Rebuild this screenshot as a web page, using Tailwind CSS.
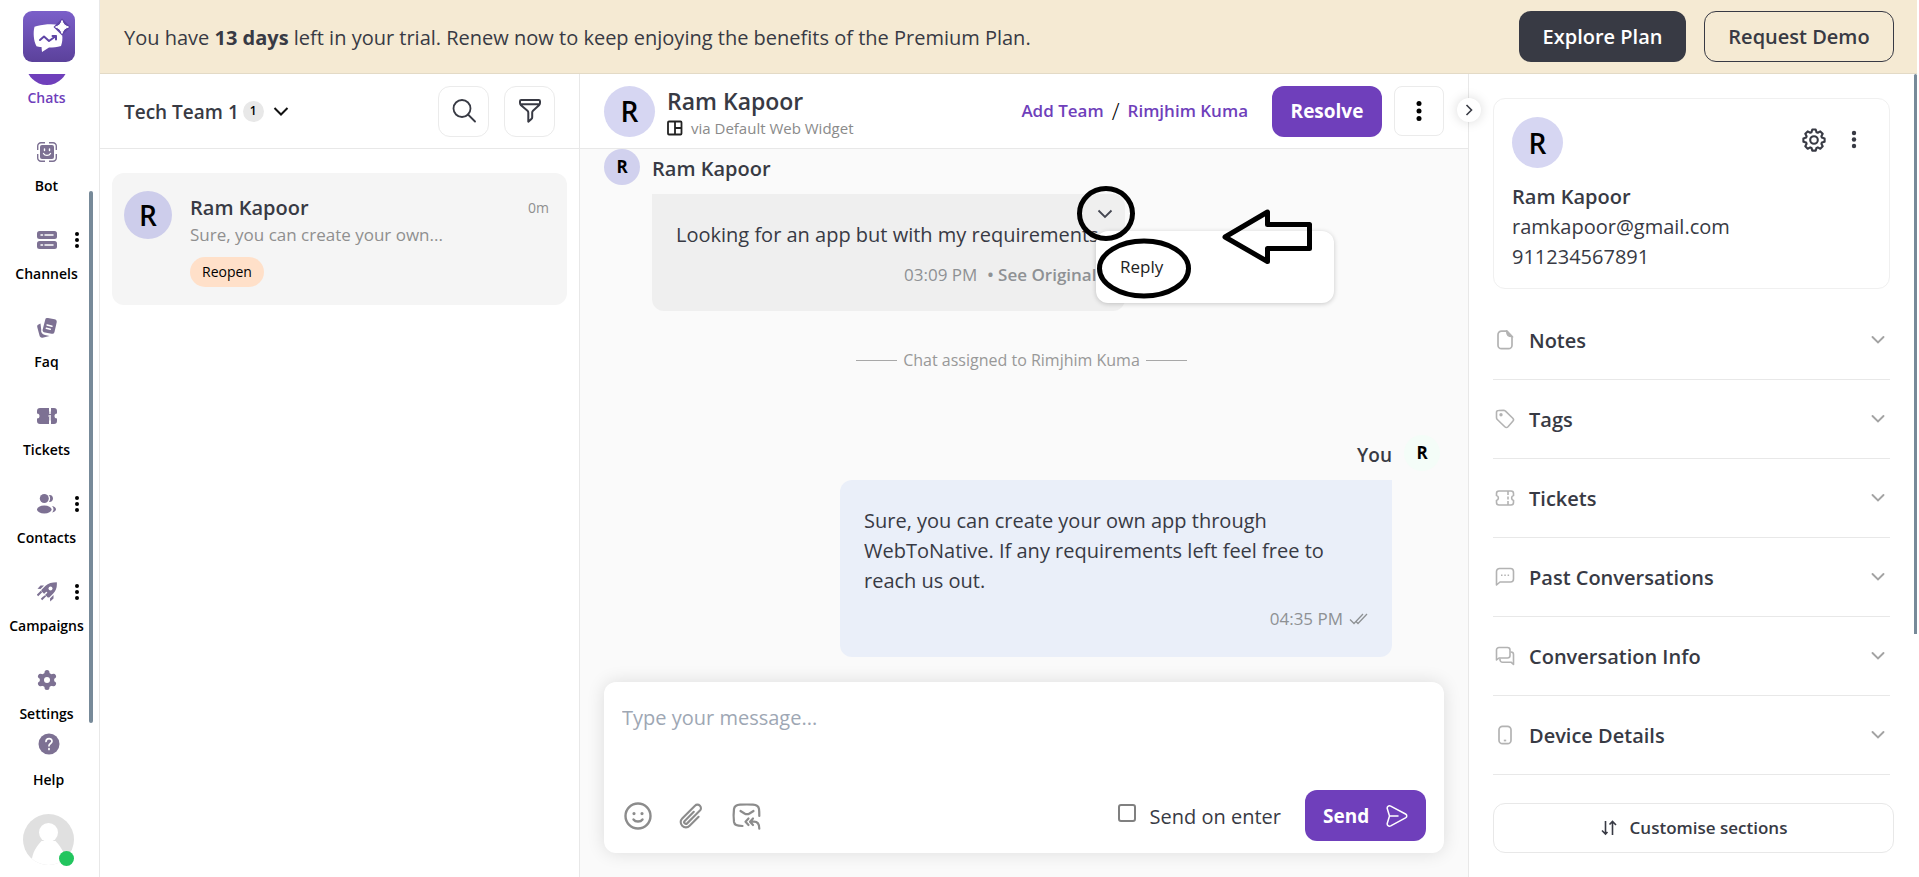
<!DOCTYPE html>
<html lang="en">
<head>
    <meta charset="UTF-8">
    <meta name="viewport" content="width=device-width, initial-scale=1.0">
    <title>Chats</title>
    <!-- Tailwind CSS CDN -->
    <script src="https://cdn.jsdelivr.net/npm/@tailwindcss/browser@4"></script>
</head>
<body class="flex h-screen overflow-hidden bg-white pr-0.5 font-['Open_Sans','Noto_Sans',sans-serif] text-[20px] leading-[30px] text-[#383a44]">
    <!-- Sidebar -->
    <aside class="relative flex w-[100px] shrink-0 flex-col border-r border-[#e8e8e8] text-sm font-semibold text-black">
        <a href="#" aria-label="Home" class="ml-[23px] mt-[11px] mb-3 block">
            <svg width="52" height="51" viewBox="0 0 52 51">
                <defs>
                    <linearGradient id="logoFill" x1="0" y1="0" x2="0" y2="1">
                        <stop offset="0" stop-color="#7b5fc9"/>
                        <stop offset="1" stop-color="#5b419b"/>
                    </linearGradient>
                </defs>
                <rect width="52" height="51" rx="9" fill="url(#logoFill)"/>
                <path d="M14 15c8-2 16-2 22-1l3 9c1 5 0 9-1 12-4 1.500-8 1.500-12 1.500L19 41l-.5-5c-2 0-4-.3-5-.8-3-5-3.500-14-2-19.400z" fill="#fff"/>
                <path d="M39 7.500 47.500 16 39 24.500 30.500 16z" fill="#5f45a6"/>
                <path d="M39 9.500c1 3.500 3 5.500 6.500 6.500-3.500 1-5.500 3-6.500 6.500-1-3.500-3-5.500-6.500-6.500 3.500-1 5.500-3 6.500-6.500z" fill="#fff" stroke="#fff" stroke-linejoin="round"/>
                <path d="m17 29 4-3.500 5 4.500 7-5M29.500 25H33v3.500" fill="none" stroke="#5f45a6" stroke-width="2" stroke-linecap="round" stroke-linejoin="round"/>
            </svg>
        </a>

        <nav class="h-[650px] overflow-hidden pr-1.5">
            <a href="#" class="-mt-[31px] flex h-[88px] flex-col items-center text-[#6f3fbb]">
                <span class="size-[42px] rounded-full bg-[#6f3fbb]"></span>
                <span class="mt-[3px] leading-5">Chats</span>
            </a>
            <a href="#" class="flex h-[88px] flex-col items-center">
                <span class="flex size-[42px] items-center justify-center">
                    <svg width="20" height="20" viewBox="0 0 20 20" fill="none" stroke="#7d7193">
                        <rect x="3" y="3" width="14" height="14" rx="2" fill="#7d7193" stroke="none"/>
                        <path d="M.7 8V4A3.300 3.300 0 0 1 4 .7h4M12 .7h4A3.300 3.300 0 0 1 19.300 4v4M19.300 12v4a3.300 3.300 0 0 1-3.300 3.300h-4M8 19.300H4A3.300 3.300 0 0 1 .7 16v-4" stroke-width="1.400"/>
                        <path d="M7.500 7v1.500M12.500 7v1.500M6.500 11.500c1.500 2.500 5.500 2.500 7 0" stroke="#fff" stroke-width="1.400" stroke-linecap="round"/>
                    </svg>
                </span>
                <span class="mt-[3px] leading-5">Bot</span>
            </a>
            <a href="#" class="relative flex h-[88px] flex-col items-center">
                <span class="flex size-[42px] items-center justify-center">
                    <svg width="20" height="18" viewBox="0 0 20 18">
                        <rect width="20" height="8" rx="2.500" fill="#7d7193"/>
                        <rect y="10" width="20" height="8" rx="2.500" fill="#7d7193"/>
                        <path d="M4 4h1.500M8 4h8M4 14h1.500M8 14h8" stroke="#fff" stroke-width="1.500" stroke-linecap="round"/>
                    </svg>
                </span>
                <span class="mt-[3px] leading-5">Channels</span>
                <svg class="absolute -right-px top-3" width="36" height="18" viewBox="0 0 36 18"><circle cx="19" cy="3" r="2"/><circle cx="19" cy="9" r="2"/><circle cx="19" cy="15" r="2"/></svg>
            </a>
            <a href="#" class="flex h-[88px] flex-col items-center">
                <span class="flex size-[42px] items-center justify-center">
                    <svg width="20" height="20" viewBox="0 0 20 20">
                        <path d="M3.500 5.500 1.500 6.500C.3 7 0 8 .3 9.200l2.200 8.300c.4 1.500 1.500 2.500 3 2.200l7-1.700-4.500-1C5 16.200 3.700 14.500 4.200 11.500z" fill="#7d7193"/>
                        <path d="M8.500.8c.5-.7 1.500-1 2.500-.8l6.500 1.300c1.500.3 2.500 1.500 2.200 3L17.500 14c-.4 1.500-1.500 2-3 1.800L8 14.500c-1.800-.4-2.700-1.500-2.300-3z" fill="#7d7193"/>
                        <path d="m10 7 5 1.300M9.300 10.300l4 1" stroke="#fff" stroke-width="1.400" stroke-linecap="round"/>
                    </svg>
                </span>
                <span class="mt-[3px] leading-5">Faq</span>
            </a>
            <a href="#" class="flex h-[88px] flex-col items-center">
                <span class="flex size-[42px] items-center justify-center">
                    <svg width="20" height="16" viewBox="0 0 20 16">
                        <path d="M3 0h9v3.500h2V0h3a3 3 0 0 1 3 3v2.500a2.500 2.500 0 0 0 0 5V13a3 3 0 0 1-3 3h-3v-3.500h-2V16H3a3 3 0 0 1-3-3v-2.500a2.500 2.500 0 0 0 0-5V3a3 3 0 0 1 3-3z" fill="#7d7193"/>
                        <path d="M13 3v3M13 9v4M11.500 8H14" stroke="#fff" stroke-width="1.500"/>
                    </svg>
                </span>
                <span class="mt-[3px] leading-5">Tickets</span>
            </a>
            <a href="#" class="relative flex h-[88px] flex-col items-center">
                <span class="flex size-[42px] items-center justify-center">
                    <svg width="20" height="20" viewBox="0 0 20 20" fill="#7d7193">
                        <circle cx="7.300" cy="4.500" r="4.500"/>
                        <ellipse cx="7.300" cy="15.500" rx="7.300" ry="4"/>
                        <path d="M12 1c2.500-.5 4 1.500 4 3.500S14.500 8.300 12 8c1.500-2 1.500-5 0-7zM15 12c2.500.3 4 1.700 4 3.300 0 1.500-1.500 3-4 3.200 2-2 2-4.500 0-6.500z"/>
                    </svg>
                </span>
                <span class="mt-[3px] leading-5">Contacts</span>
                <svg class="absolute -right-px top-3" width="36" height="18" viewBox="0 0 36 18"><circle cx="19" cy="3" r="2"/><circle cx="19" cy="9" r="2"/><circle cx="19" cy="15" r="2"/></svg>
            </a>
            <a href="#" class="relative flex h-[88px] flex-col items-center">
                <span class="flex size-[42px] items-center justify-center">
                    <svg width="20" height="20" viewBox="0 0 20 20">
                        <path d="M19.800.2c.5 5-.8 8.500-3.800 11.500l-3.500 3.500c-.5.500-1.200.5-1.700.3l-6.300-6.300c-.3-.5-.2-1.200.3-1.700L8.300 4C11.300 1 15 .2 19.800.2zM7 3.500 3.500 7 .5 6.800 3.500 3.500zM16.500 13 13 16.500l.2 3 3.300-3z" fill="#7d7193"/>
                        <path d="m4.500 11.500-4 4M8.500 15.500l-4 4" stroke="#7d7193" stroke-width="2" transform="translate(0 -2)"/>
                        <circle cx="13.500" cy="6.500" r="2" fill="#fff"/>
                        <path d="m6.500 13.500 3-3" stroke="#fff" stroke-width="1.500" stroke-linecap="round"/>
                    </svg>
                </span>
                <span class="mt-[3px] leading-5">Campaigns</span>
                <svg class="absolute -right-px top-3" width="36" height="18" viewBox="0 0 36 18"><circle cx="19" cy="3" r="2"/><circle cx="19" cy="9" r="2"/><circle cx="19" cy="15" r="2"/></svg>
            </a>
            <a href="#" class="flex h-[88px] flex-col items-center">
                <span class="flex size-[42px] items-center justify-center">
                    <svg width="20" height="20" viewBox="0 0 20 20">
                        <path d="M10 10 10 2.500M10 10l6.500-3.750M10 10l6.500 3.750M10 10v7.500M10 10l-6.500 3.750M10 10 3.500 6.250" stroke="#7d7193" stroke-width="5" stroke-linecap="round"/>
                        <circle cx="10" cy="10" r="7.300" fill="#7d7193"/>
                        <circle cx="10" cy="10" r="3" fill="#fff"/>
                    </svg>
                </span>
                <span class="mt-[3px] leading-5">Settings</span>
            </a>
        </nav>
        <div class="absolute left-[89px] top-[191px] h-[532px] w-1 rounded-full bg-[#778a99]"></div>

        <a href="#" class="mt-[9px] flex flex-col items-center pr-0.5">
            <svg width="22" height="22" viewBox="0 0 22 22" fill="none">
                <circle cx="11" cy="11" r="10.500" fill="#7d7193"/>
                <path d="M8 8.500c.2-4 6-3.700 6-.3 0 2.300-3 2.300-3 4.600M11 15.500v1" stroke="#fff" stroke-width="1.700" stroke-linecap="round"/>
            </svg>
            <span class="mt-[15px] leading-5">Help</span>
        </a>
        <button type="button" aria-label="Profile" class="relative ml-[23px] mt-6 size-[51px]">
            <svg width="51" height="51" viewBox="0 0 51 51">
                <clipPath id="avatarClip"><circle cx="25.500" cy="25.500" r="25.500"/></clipPath>
                <g clip-path="url(#avatarClip)">
                    <rect width="51" height="51" fill="#e0e0e0"/>
                    <circle cx="25.500" cy="18.500" r="9.500" fill="#fff"/>
                    <path d="M8.500 51c0-10 3-16.500 10-24h14c7 7.500 10 14 10 24z" fill="#fff"/>
                </g>
            </svg>
            <span class="absolute -bottom-px right-0 size-[15px] rounded-full bg-[#22c55e]"></span>
        </button>
    </aside>

    <div class="flex min-w-0 flex-1 flex-col">
        <!-- Trial banner -->
        <div class="flex h-[74px] shrink-0 items-center justify-between border-b border-[#e3dac6] bg-[#f5ead3] pl-6 pr-[23px]">
            <p class="pt-0.5">You have <b class="font-bold">13 days</b> left in your trial. Renew now to keep enjoying the benefits of the Premium Plan.</p>
            <div class="flex gap-[18px] font-semibold">
                <button type="button" class="h-[51px] w-[167px] rounded-xl bg-[#383a44] text-white">Explore Plan</button>
                <button type="button" class="h-[51px] w-[190px] rounded-xl border border-[#383a44]">Request Demo</button>
            </div>
        </div>

        <div class="flex min-h-0 flex-1">
            <!-- Conversation list -->
            <section class="w-[480px] shrink-0 border-r border-[#e8e8e8]">
                <header class="flex h-[75px] items-center border-b border-[#e8e8e8] pl-6 pr-6">
                    <button type="button" class="flex items-center text-[19px] font-semibold">
                        <span class="pt-0.5">Tech Team 1</span>
                        <span class="ml-1 flex size-[21px] items-center justify-center rounded-full bg-[#e8e8e8] text-xs text-black">1</span>
                        <svg class="ml-2" width="18" height="18" viewBox="0 0 18 18" fill="none" stroke="#111" stroke-width="2"><path d="m2.500 6 6.500 6.500L15.500 6"/></svg>
                    </button>
                    <button type="button" aria-label="Search" class="ml-auto flex size-[51px] items-center justify-center rounded-xl border border-[#ebebeb]">
                        <svg width="24" height="24" viewBox="0 0 24 24" fill="none" stroke="#383a44" stroke-width="1.800" stroke-linecap="round"><circle cx="10" cy="9.500" r="8.500"/><path d="m16 15.500 7 7"/></svg>
                    </button>
                    <button type="button" aria-label="Filter" class="ml-[15px] flex size-[51px] items-center justify-center rounded-xl border border-[#ebebeb]">
                        <svg width="22" height="24" viewBox="0 0 22 24" fill="none" stroke="#383a44" stroke-width="2" stroke-linejoin="round"><path d="M2.200 1h17.600c.7 0 1.200.5 1.200 1.200V4c0 1-.4 1.700-1 2.300l-6 5.500c-.5.500-.8 1-.8 1.700v4.700c0 .8-.3 1.300-.8 1.700L9.300 22.700v-9c0-.8-.3-1.500-.8-2L2 6.300C1.400 5.700 1 5 1 4V2.200C1 1.500 1.500 1 2.200 1zM1.500 5.300h19"/></svg>
                    </button>
                </header>
                <a href="#" class="mx-3 mt-6 flex h-[132px] rounded-xl bg-[#f5f5f5] pl-3 pr-[18px] pt-[18px]">
                    <span class="flex size-12 items-center justify-center rounded-full bg-[#cdcdeb] text-[28px] font-semibold text-black">R</span>
                    <div class="ml-[18px] flex-1 pt-0.5">
                        <div class="flex items-center justify-between">
                            <h2 class="font-semibold">Ram Kapoor</h2>
                            <span class="text-sm text-[#8f8f8f]">0m</span>
                        </div>
                        <p class="text-[17px] leading-6 text-[#8f8f8f]">Sure, you can create your own...</p>
                        <span class="mt-2.5 inline-block rounded-full bg-[#ffe0c9] px-3 text-[14px] text-black">Reopen</span>
                    </div>
                </a>
            </section>

            <!-- Chat -->
            <main class="relative flex min-w-0 flex-1 flex-col border-r border-[#e8e8e8] bg-[#fafafa]">
                <header class="flex h-[75px] shrink-0 items-center border-b border-[#e8e8e8] bg-white px-6">
                    <span class="flex size-[51px] items-center justify-center rounded-full bg-[#d6d6f2] text-[28px] font-semibold text-black">R</span>
                    <div class="ml-3 pt-1">
                        <h1 class="text-[23px] font-semibold">Ram Kapoor</h1>
                        <p class="flex items-center gap-2 text-[15px] font-medium text-[#8a8a8a]">
                            <svg width="16" height="16" viewBox="0 0 16 16" fill="none" stroke="#222" stroke-width="1.800"><rect x="1" y="1.500" width="13.500" height="13" rx="1"/><path d="M8 1.500v13M8 8h6.500"/></svg>
                            <span class="leading-6">via Default Web Widget</span>
                        </p>
                    </div>
                    <div class="ml-auto flex items-center text-[17px] font-semibold text-[#6f3fbb]">
                        <a href="#">Add Team</a>
                        <span class="mx-2 text-[23px] font-light text-black">/</span>
                        <a href="#">Rimjhim Kuma</a>
                    </div>
                    <button type="button" class="ml-6 h-[51px] w-[110px] rounded-xl bg-[#6f3fbb] text-[19px] font-bold text-white">Resolve</button>
                    <button type="button" aria-label="More" class="ml-3 flex size-[50px] items-center justify-center rounded-lg border border-[#ebebeb]">
                        <svg width="6" height="22" viewBox="0 0 6 22"><circle cx="3" cy="3.500" r="2.500"/><circle cx="3" cy="11" r="2.500"/><circle cx="3" cy="18.500" r="2.500"/></svg>
                    </button>
                </header>
                <button type="button" aria-label="Collapse details" class="absolute -right-[13px] top-6 z-10 flex size-6 items-center justify-center rounded-full bg-white shadow-[0_0_12px_rgba(0,0,0,0.15)]">
                    <svg width="12" height="12" viewBox="0 0 12 12" fill="none" stroke="#383a44" stroke-width="1.600"><path d="m3.500 1 5 5-5 5"/></svg>
                </button>

                <div class="flex flex-1 flex-col px-6">
                    <div class="flex">
                        <span class="flex size-9 items-center justify-center rounded-full bg-[#d1d1ee] text-[17px] font-bold text-black">R</span>
                        <h2 class="ml-3 mt-1.5 font-semibold leading-7">Ram Kapoor</h2>
                    </div>

                    <div class="relative ml-12 mt-[9px] h-[117px] w-[473px] rounded-xl rounded-tl-none bg-[#efefef] px-6 pt-[26px]">
                        <p class="whitespace-nowrap">Looking for an app but with my requirements</p>
                        <p class="mt-2.5 flex whitespace-nowrap pl-[228px] text-[17px] text-[#8e9194]">03:09 PM <b class="ml-2.5 font-semibold">• See Original</b></p>
                        <button type="button" aria-label="Message options" class="absolute right-3 top-3 flex size-4 items-center justify-center">
                            <svg width="16" height="16" viewBox="0 0 16 16" fill="none" stroke="#444651" stroke-width="1.800"><path d="m1.500 4.500 6.500 6.500 6.500-6.500"/></svg>
                        </button>
                        <div class="absolute left-[444px] top-[37px] flex h-[72px] w-[238px] items-center rounded-xl bg-white px-6 shadow-[0_1px_5px_rgba(0,0,0,0.2)]">
                            <button type="button" class="text-[17px] text-[#222]">Reply</button>
                        </div>
                        <!-- Callouts drawn over the menu -->
                        <svg class="pointer-events-none absolute left-[420px] top-[-12px]" width="250" height="122" viewBox="0 0 250 122" fill="none" stroke="#000" stroke-width="5">
                            <ellipse cx="34" cy="31.500" rx="26.500" ry="25"/>
                            <ellipse cx="72" cy="86.500" rx="44.500" ry="27.500"/>
                            <path d="M153 55 195.500 30v12.500H237.500v24H195.500v13z" stroke-linejoin="round"/>
                        </svg>
                    </div>

                    <p class="mt-[34px] flex items-center justify-center gap-1.5 pr-[5px] text-[16px] text-[#989898]">
                        <span class="w-[41px] border-t border-[#a8a8a8]"></span>
                        Chat assigned to Rimjhim Kuma
                        <span class="w-[41px] border-t border-[#a8a8a8]"></span>
                    </p>

                    <div class="mr-1 mt-[60px] flex justify-end">
                        <h2 class="mt-1.5 text-[19px] font-semibold leading-7">You</h2>
                        <span class="ml-3 flex size-9 items-center justify-center rounded-full bg-[#f4fdf8] text-[17px] font-bold text-black">R</span>
                    </div>
                    <div class="mr-[52px] mt-[9px] h-[177px] w-[552px] self-end rounded-xl rounded-tr-none bg-[#eaeff9] px-6 pt-[26px]">
                        <p class="pr-8">Sure, you can create your own app through WebToNative. If any requirements left feel free to reach us out.</p>
                        <p class="mt-2 flex items-center justify-end gap-1.5 text-[17px] text-[#8e9194]">
                            04:35 PM
                            <svg width="19" height="12" viewBox="0 0 19 12" fill="none" stroke="#8e9194" stroke-width="1.300"><path d="m1 6.500 4 4L14 1M7 8.500l2 2L18 1"/></svg>
                        </p>
                    </div>
                </div>

                <form class="mx-6 mb-6 flex h-[171px] flex-col rounded-xl bg-white pb-3 pl-[18px] pr-[18px] pt-[21px] shadow-[0_0_18px_rgba(0,0,0,0.12)]">
                    <textarea aria-label="Message" placeholder="Type your message..." class="w-full flex-1 resize-none outline-none placeholder:text-[#9ea7b4]"></textarea>
                    <div class="flex items-center">
                        <button type="button" aria-label="Emoji" class="ml-0.5">
                            <svg width="28" height="28" viewBox="0 0 28 28" fill="none" stroke="#8c8c8c" stroke-width="2.400" stroke-linecap="round"><circle cx="14" cy="14" r="12.500"/><path d="M9.500 17.500c2 2.700 7 2.700 9 0"/><path d="M10 11.500v.1M18 11.500v.1" stroke-width="3.200"/></svg>
                        </button>
                        <button type="button" aria-label="Attach file" class="ml-6">
                            <svg width="28" height="28" viewBox="0 0 24 24" fill="none" stroke="#8c8c8c" stroke-width="1.800" stroke-linecap="round" stroke-linejoin="round"><path d="m18.375 12.739-7.693 7.693a4.500 4.500 0 0 1-6.364-6.364l10.940-10.940A3 3 0 1 1 19.500 7.372L8.552 18.320m.009-.010-.010.010m5.699-9.941-7.810 7.810a1.500 1.500 0 0 0 2.112 2.130l7.100-7.100" transform="translate(1 0)"/></svg>
                        </button>
                        <button type="button" aria-label="Saved replies" class="ml-7">
                            <svg width="30" height="28" viewBox="0 0 30 28" fill="none" stroke="#8c8c8c" stroke-width="2.200" stroke-linecap="round" stroke-linejoin="round"><path d="M10.500 24c-6-.3-8-1-8.500-4-.5-4-.5-9 0-13 .5-3 2-4 6-4.300 5-.3 9-.3 13 0 4 .3 5.500 1.300 6 4.300.3 2 .3 4.500.3 7"/><path d="m8.500 9 4 2.500c1.700 1 3.300 1 5 0l4-2.500M16.500 16.500l-3 3.200 3 3.300M21 16.500l-3 3.200 3 3.300M18.500 19.700h3.500c3.500 0 5.300 2.300 5.300 7"/></svg>
                        </button>
                        <label for="sendOnEnter" class="ml-auto flex items-start gap-[14px]">
                            <input type="checkbox" id="sendOnEnter" class="mt-1 size-[18px] appearance-none rounded-[3px] border-2 border-[#808080]">
                            <span class="pt-0.5">Send on enter</span>
                        </label>
                        <button type="submit" class="ml-6 flex h-[51px] w-[121px] items-center justify-between rounded-xl bg-[#6f3fbb] px-[18px] text-[19px] font-bold text-white">
                            Send
                            <svg width="22" height="22" viewBox="0 0 22 22" fill="none" stroke="#fff" stroke-width="1.500" stroke-linecap="round" stroke-linejoin="round"><path d="M4.700 1.200 19.500 9c1.700 1 1.700 2.800 0 3.800L4.700 20.800c-2 1-4-.5-3.400-2.600L3.500 11 1.300 3.800C.7 1.700 2.700.2 4.700 1.200zM3.500 11h8.500"/></svg>
                        </button>
                    </div>
                </form>
            </main>

            <!-- Contact details -->
            <aside class="relative flex w-[448px] shrink-0 flex-col pl-6 pr-[27px] pt-6">
                <div class="h-[191px] rounded-xl border border-[#f0f0f0] px-[18px] pt-[18px]">
                    <div class="flex items-start">
                        <span class="flex size-[51px] items-center justify-center rounded-full bg-[#d6d6f2] text-[28px] font-semibold text-black">R</span>
                        <button type="button" aria-label="Contact settings" class="ml-auto mt-[11px]">
                            <svg width="24" height="24" viewBox="0 0 24 24" fill="none" stroke="#383a44" stroke-width="2.100" stroke-linejoin="round"><circle cx="12" cy="12" r="3.800"/><path d="M10.300 1.500h3.400l.8 2.700 1.300.5 2.500-1.300 2.400 2.400-1.300 2.500.5 1.300 2.700.8v3.300l-2.700.8-.5 1.300 1.300 2.500-2.400 2.400-2.500-1.300-1.300.5-.8 2.700h-3.400l-.8-2.700-1.300-.5-2.500 1.300-2.400-2.400 1.300-2.500-.5-1.300-2.700-.8v-3.300l2.700-.8.5-1.300-1.300-2.500 2.400-2.400 2.500 1.300 1.300-.5z"/></svg>
                        </button>
                        <button type="button" aria-label="More contact actions" class="ml-[25px] mr-3.5 mt-[13px]">
                            <svg width="6" height="20" viewBox="0 0 6 20" fill="#383a44"><circle cx="3" cy="3" r="2.200"/><circle cx="3" cy="9.500" r="2.200"/><circle cx="3" cy="16" r="2.200"/></svg>
                        </button>
                    </div>
                    <h2 class="mt-3.5 font-semibold">Ram Kapoor</h2>
                    <p>ramkapoor@gmail.com</p>
                    <p>911234567891</p>
                </div>

                <div class="mt-3 flex flex-col font-semibold">
                    <button type="button" class="flex h-[79px] items-center border-b border-[#e8e8e8] text-left">
                        <svg class="ml-0.5" width="20" height="20" viewBox="0 0 20 20" fill="none" stroke="#b3b3b3" stroke-width="1.700"><path d="M6.500 1.200H12L17 6.500v8.700a3.500 3.500 0 0 1-3.500 3.500h-7A3.500 3.500 0 0 1 3 15.200V4.700a3.500 3.500 0 0 1 3.500-3.500z"/><path d="M11.800 1.500c0 3.500 1.500 5 5 5z" fill="#b3b3b3"/></svg>
                        <span class="ml-3.5 flex-1 pt-0.5">Notes</span>
                        <svg class="mr-[5px]" width="14" height="14" viewBox="0 0 14 14" fill="none" stroke="#a3a3a3" stroke-width="1.900" stroke-linecap="round"><path d="M1.500 4 7 9.500 12.500 4"/></svg>
                    </button>
                    <button type="button" class="flex h-[79px] items-center border-b border-[#e8e8e8] text-left">
                        <svg class="ml-0.5" width="20" height="20" viewBox="0 0 20 20" fill="none" stroke="#b3b3b3" stroke-width="1.600" stroke-linejoin="round"><path d="M1.500 3.500c0-1.300.7-2 2-2l5-.2c.8 0 1.400.3 2 .8l7.300 7.200c1 1 1 2 0 3L13 17.800c-1 1-2.200 1-3.200 0L2.300 10.500c-.6-.6-.8-1.200-.8-2z"/><circle cx="6" cy="5.800" r=".9" fill="#b3b3b3"/></svg>
                        <span class="ml-3.5 flex-1 pt-0.5">Tags</span>
                        <svg class="mr-[5px]" width="14" height="14" viewBox="0 0 14 14" fill="none" stroke="#a3a3a3" stroke-width="1.900" stroke-linecap="round"><path d="M1.500 4 7 9.500 12.500 4"/></svg>
                    </button>
                    <button type="button" class="flex h-[79px] items-center border-b border-[#e8e8e8] text-left">
                        <svg class="ml-0.5" width="20" height="20" viewBox="0 0 20 20" fill="none" stroke="#b3b3b3" stroke-width="1.600"><path d="M4 3h12c1.800 0 2.500 1 2.500 2.500v2a2.600 2.600 0 0 0 0 5v2c0 1.500-.7 2.500-2.500 2.500H4c-1.800 0-2.500-1-2.500-2.500v-2a2.600 2.600 0 0 0 0-5v-2C1.500 4 2.200 3 4 3zM13 3v4M13 8.500v3M13 13v4"/></svg>
                        <span class="ml-3.5 flex-1 pt-0.5">Tickets</span>
                        <svg class="mr-[5px]" width="14" height="14" viewBox="0 0 14 14" fill="none" stroke="#a3a3a3" stroke-width="1.900" stroke-linecap="round"><path d="M1.500 4 7 9.500 12.500 4"/></svg>
                    </button>
                    <button type="button" class="flex h-[79px] items-center border-b border-[#e8e8e8] text-left">
                        <svg class="ml-0.5" width="20" height="20" viewBox="0 0 20 20" fill="none" stroke="#b3b3b3" stroke-width="1.600" stroke-linejoin="round"><path d="M1.500 18V4.500a3 3 0 0 1 3-3h11a3 3 0 0 1 3 3V12a3 3 0 0 1-3 3H5z"/><path d="M6 8.200h1.500M9.300 8.200h1.500M12.600 8.200h1.500"/></svg>
                        <span class="ml-3.5 flex-1 pt-0.5">Past Conversations</span>
                        <svg class="mr-[5px]" width="14" height="14" viewBox="0 0 14 14" fill="none" stroke="#a3a3a3" stroke-width="1.900" stroke-linecap="round"><path d="M1.500 4 7 9.500 12.500 4"/></svg>
                    </button>
                    <button type="button" class="flex h-[79px] items-center border-b border-[#e8e8e8] text-left">
                        <svg class="ml-0.5" width="20" height="20" viewBox="0 0 20 20" fill="none" stroke="#b3b3b3" stroke-width="1.600" stroke-linejoin="round"><path d="M1.500 14V4a2.500 2.500 0 0 1 2.500-2.500h8.500A2.500 2.500 0 0 1 15 4v5.500a2.500 2.500 0 0 1-2.500 2.500H4z"/><path d="M15.500 6h.5a2.500 2.500 0 0 1 2.500 2.500v10L16 16.200H7.500A2.500 2.500 0 0 1 5 13.700V12.500"/></svg>
                        <span class="ml-3.5 flex-1 pt-0.5">Conversation Info</span>
                        <svg class="mr-[5px]" width="14" height="14" viewBox="0 0 14 14" fill="none" stroke="#a3a3a3" stroke-width="1.900" stroke-linecap="round"><path d="M1.500 4 7 9.500 12.500 4"/></svg>
                    </button>
                    <button type="button" class="flex h-[79px] items-center border-b border-[#e8e8e8] text-left">
                        <svg class="ml-0.5" width="20" height="20" viewBox="0 0 20 20" fill="none" stroke="#b3b3b3" stroke-width="1.700"><rect x="4" y="1.300" width="12" height="17.400" rx="3.500"/><path d="M8.800 15.500h2.400"/></svg>
                        <span class="ml-3.5 flex-1 pt-0.5">Device Details</span>
                        <svg class="mr-[5px]" width="14" height="14" viewBox="0 0 14 14" fill="none" stroke="#a3a3a3" stroke-width="1.900" stroke-linecap="round"><path d="M1.500 4 7 9.500 12.500 4"/></svg>
                    </button>
                </div>

                <button type="button" class="-mr-1 mb-6 mt-auto flex h-[50px] items-center justify-center gap-3 rounded-xl border border-[#e8e8e8] text-[17px] font-semibold">
                    <svg width="18" height="18" viewBox="0 0 18 18" fill="none" stroke="#383a44" stroke-width="1.600"><path d="M5.500 2v13M2 11.500 5.500 15 7.500 13M12.500 16V2.500M9.500 5.500l3-3L16 6"/></svg>
                    Customise sections
                </button>
                <div class="absolute right-0 top-0 h-[560px] w-[3px] rounded-t-full bg-[#778a99]"></div>
            </aside>
        </div>
    </div>
</body>
</html>
